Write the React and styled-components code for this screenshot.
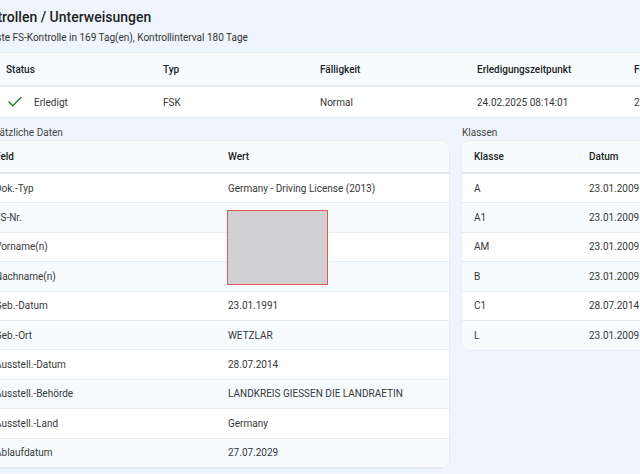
import React from 'react';
import styled, { createGlobalStyle } from 'styled-components';
import { Check } from 'lucide-react';

const GlobalStyle = createGlobalStyle`
  body {
    margin: 0;
    font-family: Roboto, 'Noto Sans', sans-serif;
    background: #eef5fc;
    color: #333;
  }
`;

const Viewport = styled.div`
  width: 640px;
  height: 474px;
  overflow: hidden;
  background: #eef5fc;
`;

const Page = styled.div`
  width: 1000px;
  margin-left: -27px;
  padding-top: 8px;
`;

const Title = styled.h1`
  margin: 0;
  font-size: 14px;
  line-height: 18px;
  font-weight: 500;
  color: #222;
`;

const Subtitle = styled.p`
  margin: 5px 0 0;
  font-size: 10px;
  line-height: 13px;
  color: #333;
`;

const TopTable = styled.div`
  margin: 8px 0 0 21px;
  border-top: 1px solid #e6ecf2;
`;

const Row = styled.div`
  display: grid;
  grid-template-columns: ${(p) => p.$cols};
  align-items: center;
  height: ${(p) => p.$h}px;
  box-sizing: border-box;
  background: ${(p) => (p.$alt ? '#f7fbfe' : '#ffffff')};
  border-bottom: ${(p) => (p.$head ? '2px solid #e4e9ef' : '1px solid #e8edf2')};
  font-size: 10px;
  font-weight: ${(p) => (p.$head ? 500 : 400)};
  color: ${(p) => (p.$head ? '#222' : '#383838')};

  &:last-child {
    border-bottom: ${(p) => (p.$last ? 'none' : '1px solid #e8edf2')};
  }
`;

const Cell = styled.div`
  padding: 0 12px;
  white-space: nowrap;
  overflow: hidden;
  display: flex;
  align-items: center;
  gap: 10px;
`;

const StatusIcon = styled(Check)`
  color: #2e7d32;
  flex: none;
`;

const Columns = styled.div`
  display: flex;
  gap: 13px;
  margin: 7px 0 0 10px;
  align-items: flex-start;
`;

const Section = styled.section`
  width: ${(p) => p.$w}px;
  flex: none;
`;

const SectionLabel = styled.div`
  font-size: 10px;
  line-height: 15px;
  color: #444;
  margin-bottom: 1px;
`;

const Card = styled.div`
  position: relative;
  background: #fff;
  box-shadow: 0 0 0 1px #e6edf4;
  border-radius: 8px;
  overflow: hidden;
`;

const Redaction = styled.div`
  position: absolute;
  left: 244px;
  top: 69px;
  width: 99px;
  height: 73px;
  background: #d1d1d3;
  border: 1.5px solid #e35a5a;
`;

const topCols = 'repeat(6, 157px)';
const dataCols = '233px 1fr';
const classCols = '115px 116px 1fr';

const data = [
  ['Dok.-Typ', 'Germany - Driving License (2013)'],
  ['FS-Nr.', ''],
  ['Vorname(n)', ''],
  ['Nachname(n)', ''],
  ['Geb.-Datum', '23.01.1991'],
  ['Geb.-Ort', 'WETZLAR'],
  ['Ausstell.-Datum', '28.07.2014'],
  ['Ausstell.-Behörde', 'LANDKREIS GIESSEN DIE LANDRAETIN'],
  ['Ausstell.-Land', 'Germany'],
  ['Ablaufdatum', '27.07.2029'],
];

const classes = [
  ['A', '23.01.2009', '23.01.2034'],
  ['A1', '23.01.2009', '23.01.2034'],
  ['AM', '23.01.2009', '23.01.2034'],
  ['B', '23.01.2009', '23.01.2034'],
  ['C1', '28.07.2014', '27.07.2029'],
  ['L', '23.01.2009', '23.01.2034'],
];

const App = () => (
  <Viewport>
    <GlobalStyle />
    <Page>
      <Title>Kontrollen / Unterweisungen</Title>
      <Subtitle>Nächste FS-Kontrolle in 169 Tag(en), Kontrollinterval 180 Tage</Subtitle>

      <TopTable>
        <Row $cols={topCols} $h={34} $head $alt>
          <Cell>Status</Cell>
          <Cell>Typ</Cell>
          <Cell>Fälligkeit</Cell>
          <Cell>Erledigungszeitpunkt</Cell>
          <Cell>Folgetermin</Cell>
        </Row>
        <Row $cols={topCols} $h={31}>
          <Cell>
            <StatusIcon size={18} strokeWidth={1.9} />
            Erledigt
          </Cell>
          <Cell>FSK</Cell>
          <Cell>Normal</Cell>
          <Cell>24.02.2025 08:14:01</Cell>
          <Cell>23.08.2025</Cell>
        </Row>
      </TopTable>

      <Columns>
        <Section $w={466}>
          <SectionLabel>Zusätzliche Daten</SectionLabel>
          <Card>
            <Row $cols={dataCols} $h={33} $head $alt>
              <Cell>Feld</Cell>
              <Cell>Wert</Cell>
            </Row>
            {data.map(([k, v], i) => (
              <Row key={k} $cols={dataCols} $h={29.4} $alt={i % 2 === 1} $last>
                <Cell>{k}</Cell>
                <Cell>{v}</Cell>
              </Row>
            ))}
            <Redaction />
          </Card>
        </Section>

        <Section $w={320}>
          <SectionLabel>Klassen</SectionLabel>
          <Card>
            <Row $cols={classCols} $h={33} $head $alt>
              <Cell>Klasse</Cell>
              <Cell>Datum</Cell>
              <Cell>Ablauf</Cell>
            </Row>
            {classes.map(([k, d, e], i) => (
              <Row key={k} $cols={classCols} $h={29.4} $alt={i % 2 === 1} $last>
                <Cell>{k}</Cell>
                <Cell>{d}</Cell>
                <Cell>{e}</Cell>
              </Row>
            ))}
          </Card>
        </Section>
      </Columns>
    </Page>
  </Viewport>
);

export default App;
